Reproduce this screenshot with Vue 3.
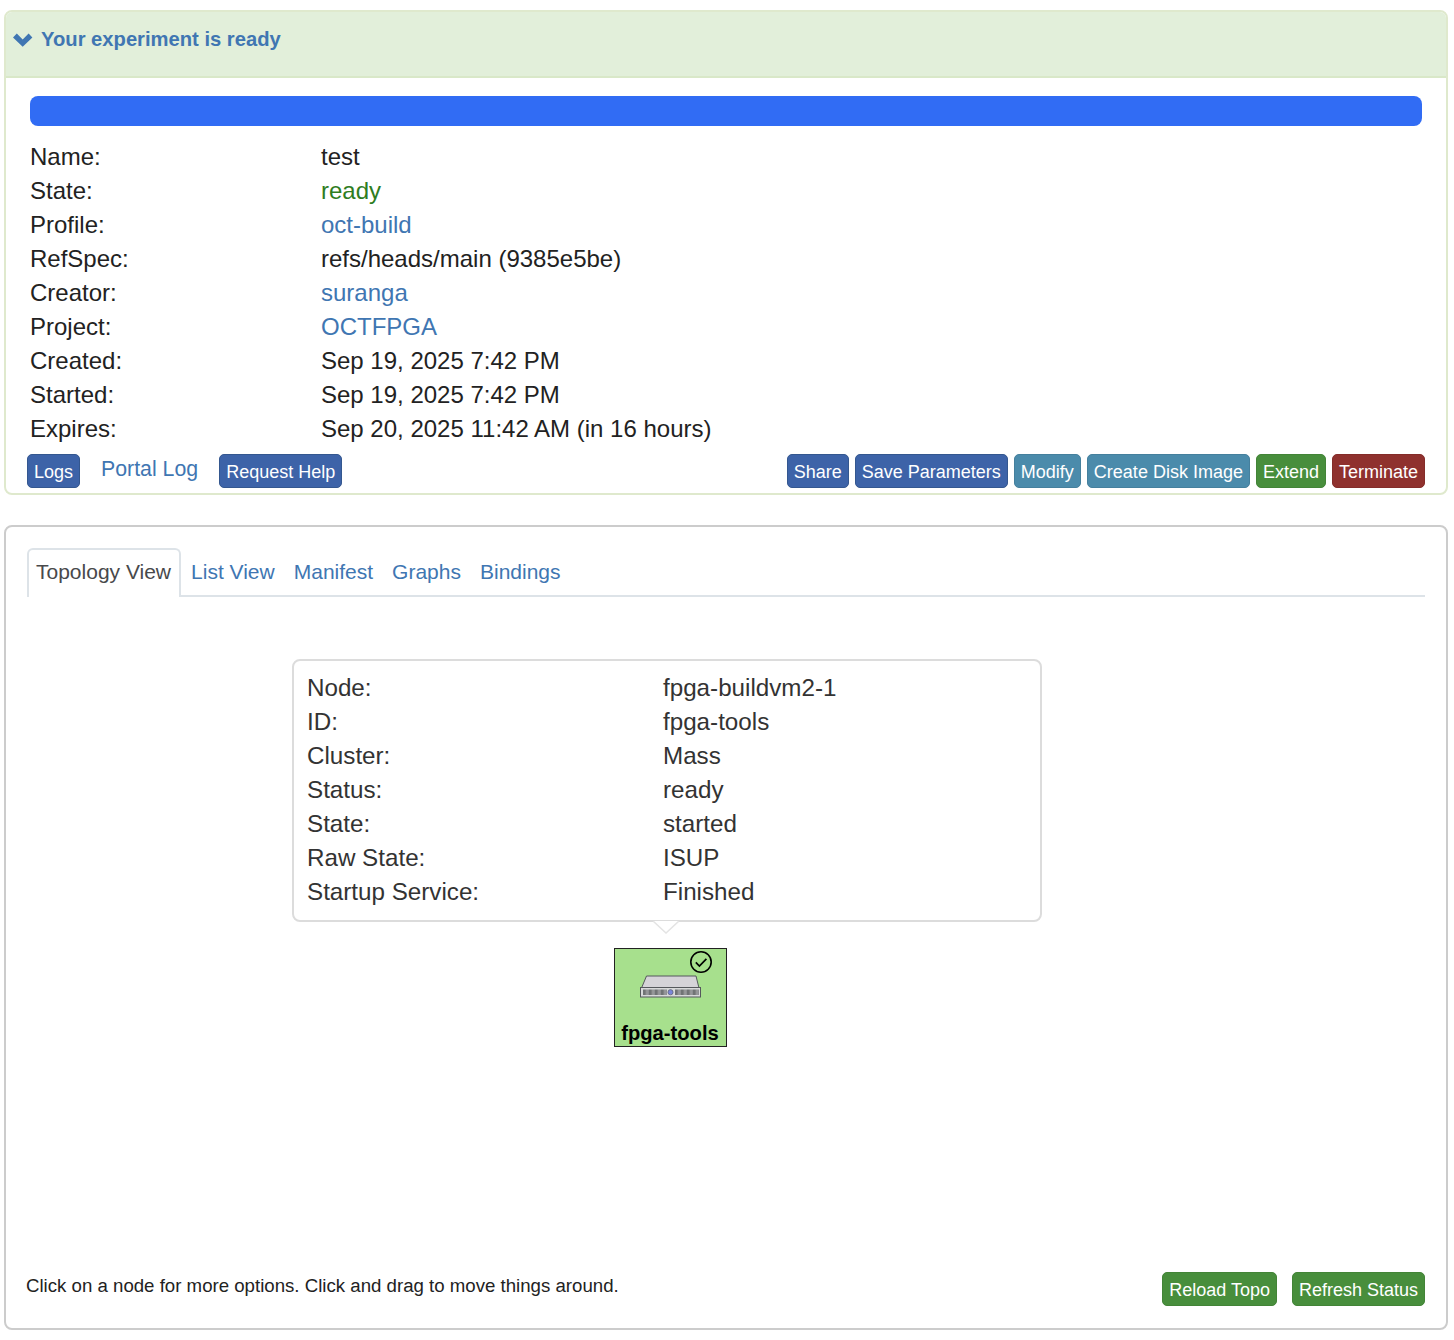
<script setup>
const rows = [
  { k: 'Name:', v: 'test' },
  { k: 'State:', v: 'ready', c: 'green' },
  { k: 'Profile:', v: 'oct-build', c: 'link' },
  { k: 'RefSpec:', v: 'refs/heads/main (9385e5be)' },
  { k: 'Creator:', v: 'suranga', c: 'link' },
  { k: 'Project:', v: 'OCTFPGA', c: 'link' },
  { k: 'Created:', v: 'Sep 19, 2025 7:42 PM' },
  { k: 'Started:', v: 'Sep 19, 2025 7:42 PM' },
  { k: 'Expires:', v: 'Sep 20, 2025 11:42 AM (in 16 hours)' },
]
const right = [
  { t: 'Share', c: 'blue' },
  { t: 'Save Parameters', c: 'blue' },
  { t: 'Modify', c: 'teal' },
  { t: 'Create Disk Image', c: 'teal' },
  { t: 'Extend', c: 'grn' },
  { t: 'Terminate', c: 'red' },
]
const tabs = ['List View', 'Manifest', 'Graphs', 'Bindings']
const info = [
  ['Node:', 'fpga-buildvm2-1'],
  ['ID:', 'fpga-tools'],
  ['Cluster:', 'Mass'],
  ['Status:', 'ready'],
  ['State:', 'started'],
  ['Raw State:', 'ISUP'],
  ['Startup Service:', 'Finished'],
]
const ticks = Array.from({ length: 20 }, (_, i) => i)
</script>

<template>
  <div class="page">
    <section class="panel ok">
      <header class="head">
        <svg class="chev" width="20" height="14" viewBox="0 0 20 14">
          <path d="M0 4.6 L3.8 0.6 L9.7 6.4 L15.6 0.6 L19.4 4.6 L9.7 13.8 Z" fill="#4076b2" />
        </svg>
        <span class="title">Your experiment is ready</span>
      </header>
      <div class="body">
        <div class="progress"></div>
        <div class="rows">
          <div v-for="r in rows" :key="r.k" class="row">
            <span class="key">{{ r.k }}</span>
            <span :class="r.c">{{ r.v }}</span>
          </div>
        </div>
        <div class="actions">
          <div class="group">
            <button class="btn blue">Logs</button>
            <a class="link portal">Portal Log</a>
            <button class="btn blue">Request Help</button>
          </div>
          <div class="group tight">
            <button v-for="b in right" :key="b.t" class="btn" :class="b.c">{{ b.t }}</button>
          </div>
        </div>
      </div>
    </section>

    <section class="panel topo">
      <nav class="tabs">
        <span class="tab active">Topology View</span>
        <a v-for="t in tabs" :key="t" class="tab link">{{ t }}</a>
      </nav>
      <div class="canvas">
        <div class="pop">
          <div v-for="i in info" :key="i[0]" class="pop-row">
            <span class="pop-key">{{ i[0] }}</span>
            <span>{{ i[1] }}</span>
          </div>
          <svg class="arrow" width="26" height="13" viewBox="0 0 26 13">
            <path d="M0 0 L13 12 L26 0" fill="#fff" stroke="#e4e4e4" stroke-width="1.5" />
          </svg>
        </div>
        <div class="node">
          <svg class="check" width="24" height="24" viewBox="0 0 24 24">
            <circle cx="12" cy="12" r="10.2" fill="none" stroke="#000" stroke-width="1.6" />
            <path d="M6.8 12.4 L10.4 16 L17.4 8.8" fill="none" stroke="#000" stroke-width="1.7" />
          </svg>
          <svg class="server" width="62" height="24" viewBox="0 0 62 24">
            <path d="M1.5 13 L6.5 1 H56 L59 13 Z" fill="#d5d3d8" stroke="#55585c" stroke-width="1" />
            <rect x="0.5" y="12.5" width="60" height="9.5" fill="#d8d9da" stroke="#55585c" stroke-width="1" />
            <g fill="#44474a">
              <rect v-for="t in ticks" :key="'a' + t" :x="3 + t * 1.2" y="14.5" width="0.7" height="5.5" />
              <rect v-for="t in ticks" :key="'b' + t" :x="35 + t * 1.2" y="14.5" width="0.7" height="5.5" />
            </g>
            <circle cx="30.5" cy="17.2" r="2.6" fill="#7a86d8" stroke="#555" stroke-width="0.6" />
          </svg>
          <span class="node-label">fpga-tools</span>
        </div>
      </div>
      <footer class="foot">
        <span class="hint">Click on a node for more options. Click and drag to move things around.</span>
        <div class="foot-btns">
          <button class="btn grn">Reload Topo</button>
          <button class="btn grn">Refresh Status</button>
        </div>
      </footer>
    </section>
  </div>
</template>

<style>
html, body { margin: 0; background: #fff; }
</style>

<style scoped>
.page {
  width: 1454px;
  height: 1340px;
  box-sizing: border-box;
  padding: 10px 6px 0 4px;
  font-family: "Liberation Sans", Arial, sans-serif;
  font-size: 24px;
  line-height: 34px;
  color: #222;
  display: flex;
  flex-direction: column;
  gap: 30px;
}
.panel { border-radius: 8px; border: 2px solid #ccc; box-sizing: border-box; background: #fff; }
.ok { border-color: #dfe9cd; height: 485px; overflow: hidden; }
.head {
  height: 56px;
  padding: 0 0 8px 7px;
  background: #e2efda;
  border-bottom: 2px solid #d9e8c8;
  box-sizing: content-box;
  display: flex;
  align-items: center;
  gap: 8px;
}
.title { color: #4076b2; font-weight: 700; font-size: 20.2px; margin-top: -2px; }
.body { padding: 18px 24px 0 24px; }
.progress { height: 30px; background: #316cf4; border-radius: 8px; }
.rows { margin-top: 14px; }
.row { display: flex; }
.key { width: 291px; flex: none; }
.green { color: #2f7d1f; }
.link { color: #4076b2; }
.actions { display: flex; justify-content: space-between; margin: 8px -3px 0 -3px; height: 34px; }
.group { display: flex; align-items: flex-start; gap: 21px; }
.group.tight { gap: 6px; }
.portal { margin-top: -2px; font-size: 21.3px; }
.btn {
  font-family: inherit;
  font-size: 18px;
  line-height: 22px;
  height: 34px;
  padding: 2px 6px 0;
  color: #fff;
  border: 1.5px solid;
  border-radius: 5px;
  box-sizing: border-box;
}
.blue { background: #3d63a8; border-color: #34578f; }
.teal { background: #4b8bab; border-color: #45809d; }
.grn { background: #488e3c; border-color: #438437; }
.red { background: #8f312e; border-color: #842c29; }
.topo { height: 805px; display: flex; flex-direction: column; padding: 21px 21px 0 21px; }
.tabs { display: flex; height: 49px; border-bottom: 2px solid #dde3e8; box-sizing: border-box; font-size: 21px; }
.tab { padding: 9px 8px 0 9px; line-height: 30px; height: 47px; margin-right: 2px; box-sizing: border-box; }
.tab.active {
  color: #48494b;
  border: 2px solid #dde3e8;
  border-bottom: 0;
  border-radius: 6px 6px 0 0;
  height: 49px;
  background: #fff;
  padding: 7px 8px 0 7px;
  margin-right: 1px;
}
.canvas { position: relative; flex: 1; }
.pop {
  position: absolute;
  left: 265px;
  top: 62px;
  width: 750px;
  height: 263px;
  box-sizing: border-box;
  border: 2px solid #dcdcdc;
  border-radius: 8px;
  background: #fff;
  padding: 10px 13px;
  color: #333;
  font-size: 24.2px;
}
.pop-row { display: flex; }
.pop-key { width: 356px; flex: none; }
.arrow { position: absolute; left: 359px; top: 260px; }
.node {
  position: absolute;
  left: 587px;
  top: 351px;
  width: 113px;
  height: 99px;
  box-sizing: border-box;
  background: #a7e08d;
  border: 1.5px solid #222;
}
.check { position: absolute; left: 74px; top: 1px; }
.server { position: absolute; left: 25px; top: 26px; }
.node-label {
  position: absolute;
  left: -1px; right: 0; top: 69px;
  text-align: center;
  font-size: 20.2px;
  font-weight: 700;
  line-height: 30px;
  color: #000;
}
.foot { display: flex; justify-content: space-between; height: 54px; }
.hint { font-size: 18.65px; line-height: 26px; color: #222; margin-left: -1px; margin-top: -1px; }
.foot-btns { display: flex; gap: 15px; margin-top: -2px; }
</style>
